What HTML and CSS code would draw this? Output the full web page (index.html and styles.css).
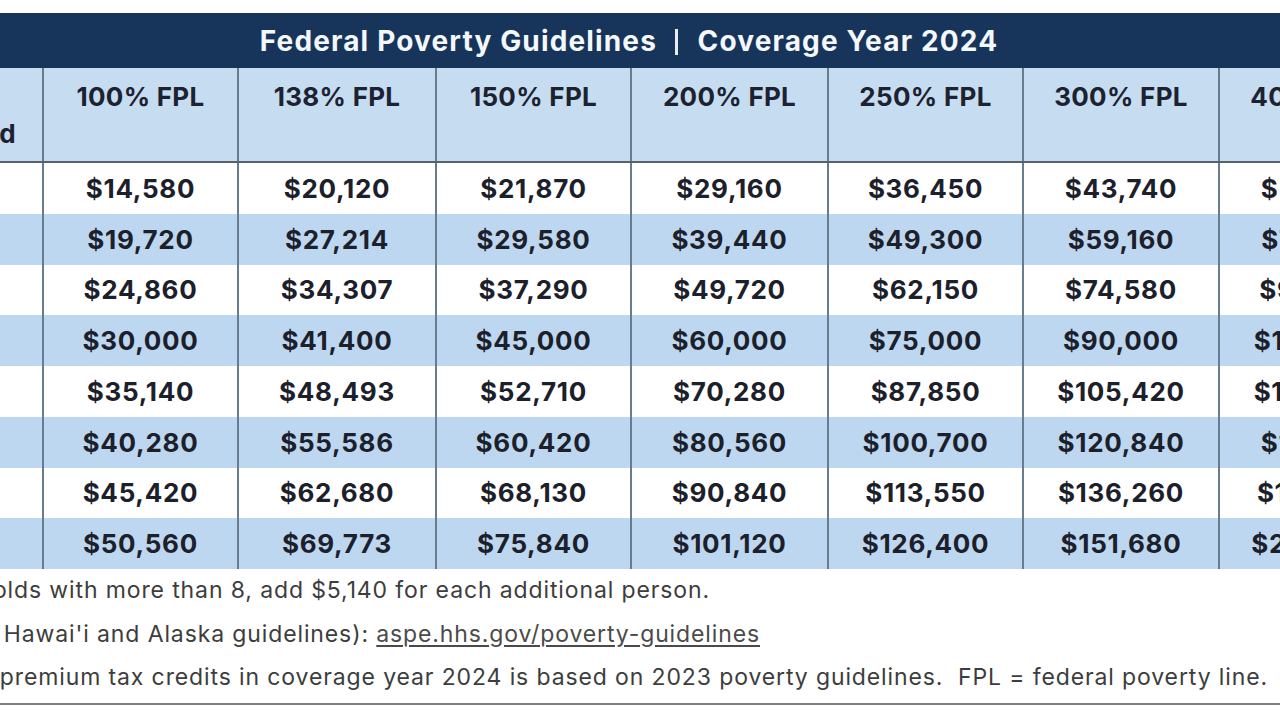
FILE: index.html
```html
<!DOCTYPE html>
<html lang="en">
<head>
<meta charset="utf-8">
<title>Federal Poverty Guidelines | Coverage Year 2024</title>
<link rel="stylesheet" href="styles.css">
</head>
<body>
<main class="sheet">
  <table class="fpl">
    <colgroup>
      <col class="c-size">
      <col class="c-a"><col class="c-b"><col class="c-a"><col class="c-c"><col class="c-a"><col class="c-d"><col class="c-d">
    </colgroup>
    <thead>
      <tr class="title-row">
        <th colspan="8">Federal Poverty Guidelines <span class="divider"></span> Coverage Year 2024</th>
      </tr>
      <tr class="head-row">
        <th class="size">Size of<br>Household</th>
        <th>100% FPL</th>
        <th>138% FPL</th>
        <th>150% FPL</th>
        <th>200% FPL</th>
        <th>250% FPL</th>
        <th>300% FPL</th>
        <th>400% FPL</th>
      </tr>
    </thead>
    <tbody>
      <tr><td class="size">1</td><td>$14,580</td><td>$20,120</td><td>$21,870</td><td>$29,160</td><td>$36,450</td><td>$43,740</td><td>$58,320</td></tr>
      <tr><td class="size">2</td><td>$19,720</td><td>$27,214</td><td>$29,580</td><td>$39,440</td><td>$49,300</td><td>$59,160</td><td>$78,880</td></tr>
      <tr><td class="size">3</td><td>$24,860</td><td>$34,307</td><td>$37,290</td><td>$49,720</td><td>$62,150</td><td>$74,580</td><td>$99,440</td></tr>
      <tr><td class="size">4</td><td>$30,000</td><td>$41,400</td><td>$45,000</td><td>$60,000</td><td>$75,000</td><td>$90,000</td><td>$120,000</td></tr>
      <tr><td class="size">5</td><td>$35,140</td><td>$48,493</td><td>$52,710</td><td>$70,280</td><td>$87,850</td><td>$105,420</td><td>$140,560</td></tr>
      <tr><td class="size">6</td><td>$40,280</td><td>$55,586</td><td>$60,420</td><td>$80,560</td><td>$100,700</td><td>$120,840</td><td>$161,120</td></tr>
      <tr><td class="size">7</td><td>$45,420</td><td>$62,680</td><td>$68,130</td><td>$90,840</td><td>$113,550</td><td>$136,260</td><td>$181,680</td></tr>
      <tr><td class="size">8</td><td>$50,560</td><td>$69,773</td><td>$75,840</td><td>$101,120</td><td>$126,400</td><td>$151,680</td><td>$202,240</td></tr>
    </tbody>
  </table>

  <div class="notes">
    <p class="note note-1"><span>For households with more than 8, add $5,140 for each additional person.</span></p>
    <p class="note note-2"><span>Source (excludes Hawai'i and Alaska guidelines): <a class="link" href="#">aspe.hhs.gov/poverty-guidelines</a></span></p>
    <p class="note note-3"><span>Eligibility for premium tax credits in coverage year 2024 is based on 2023 poverty guidelines.&nbsp; FPL = federal poverty line.</span></p>
  </div>
</main>
</body>
</html>
```
FILE: styles.css
```css
html, body {
  margin: 0;
  padding: 0;
  background: #ffffff;
  overflow: hidden;
}

body {
  font-family: Inter, "Noto Sans", "Liberation Sans", sans-serif;
  color: #1c202b;
}

.sheet {
  width: 1572px;
  margin-left: -158px;
  padding-top: 13px;
}

.fpl {
  width: 1572px;
  table-layout: fixed;
  border-collapse: collapse;
}

.c-size { width: 200px; }
.c-a { width: 195px; }
.c-b { width: 198px; }
.c-c { width: 197px; }
.c-d { width: 196px; }

.title-row th {
  height: 55px;
  padding: 0;
  background: #17355a;
  color: #f4f7fb;
  font-size: 28px;
  font-weight: 700;
  text-align: center;
  vertical-align: middle;
  letter-spacing: 1.15px;
}

.divider {
  display: inline-block;
  width: 3px;
  height: 26px;
  margin: 0 12px 0 10px;
  background: #e9eef5;
  vertical-align: -4px;
}

.head-row th {
  height: 94px;
  padding: 10px 0 0;
  box-sizing: border-box;
  background: #c6dcf1;
  color: #1c2230;
  font-size: 26px;
  font-weight: 700;
  line-height: 37px;
  letter-spacing: 0.3px;
  text-align: center;
  vertical-align: top;
  border-left: 2px solid #687c90;
  border-right: 2px solid #687c90;
  border-bottom: 2px solid #55616e;
}

.head-row th.size {
  padding-left: 6px;
}

.fpl td {
  height: 50.75px;
  padding: 0;
  text-align: center;
  vertical-align: middle;
  font-size: 26px;
  font-weight: 700;
  letter-spacing: 0.7px;
  color: #1c202b;
  border-left: 2px solid #687c90;
  border-right: 2px solid #687c90;
}

.fpl tbody tr:nth-child(even) td {
  background: #bcd7ef;
}

.fpl tbody tr:nth-child(odd) td {
  background: #ffffff;
}

.fpl th:last-child, .fpl td:last-child {
  border-right: none;
}

.notes {
  width: 1572px;
  border-bottom: 2px solid #7e7e7e;
  box-shadow: 0 2px 0 #d6d6d6;
  padding-bottom: 3px;
}

.note {
  margin: 0;
  display: flex;
  justify-content: flex-end;
  white-space: nowrap;
  font-size: 23px;
  line-height: 43.5px;
  letter-spacing: 0.88px;
  color: #3d3d3d;
}

.note-1 { width: 868px; }
.note-2 { width: 918px; }
.note-3 { width: 1426px; }

.link {
  color: #4a4a4a;
  text-decoration: underline;
  text-underline-offset: 3px;
}
```
